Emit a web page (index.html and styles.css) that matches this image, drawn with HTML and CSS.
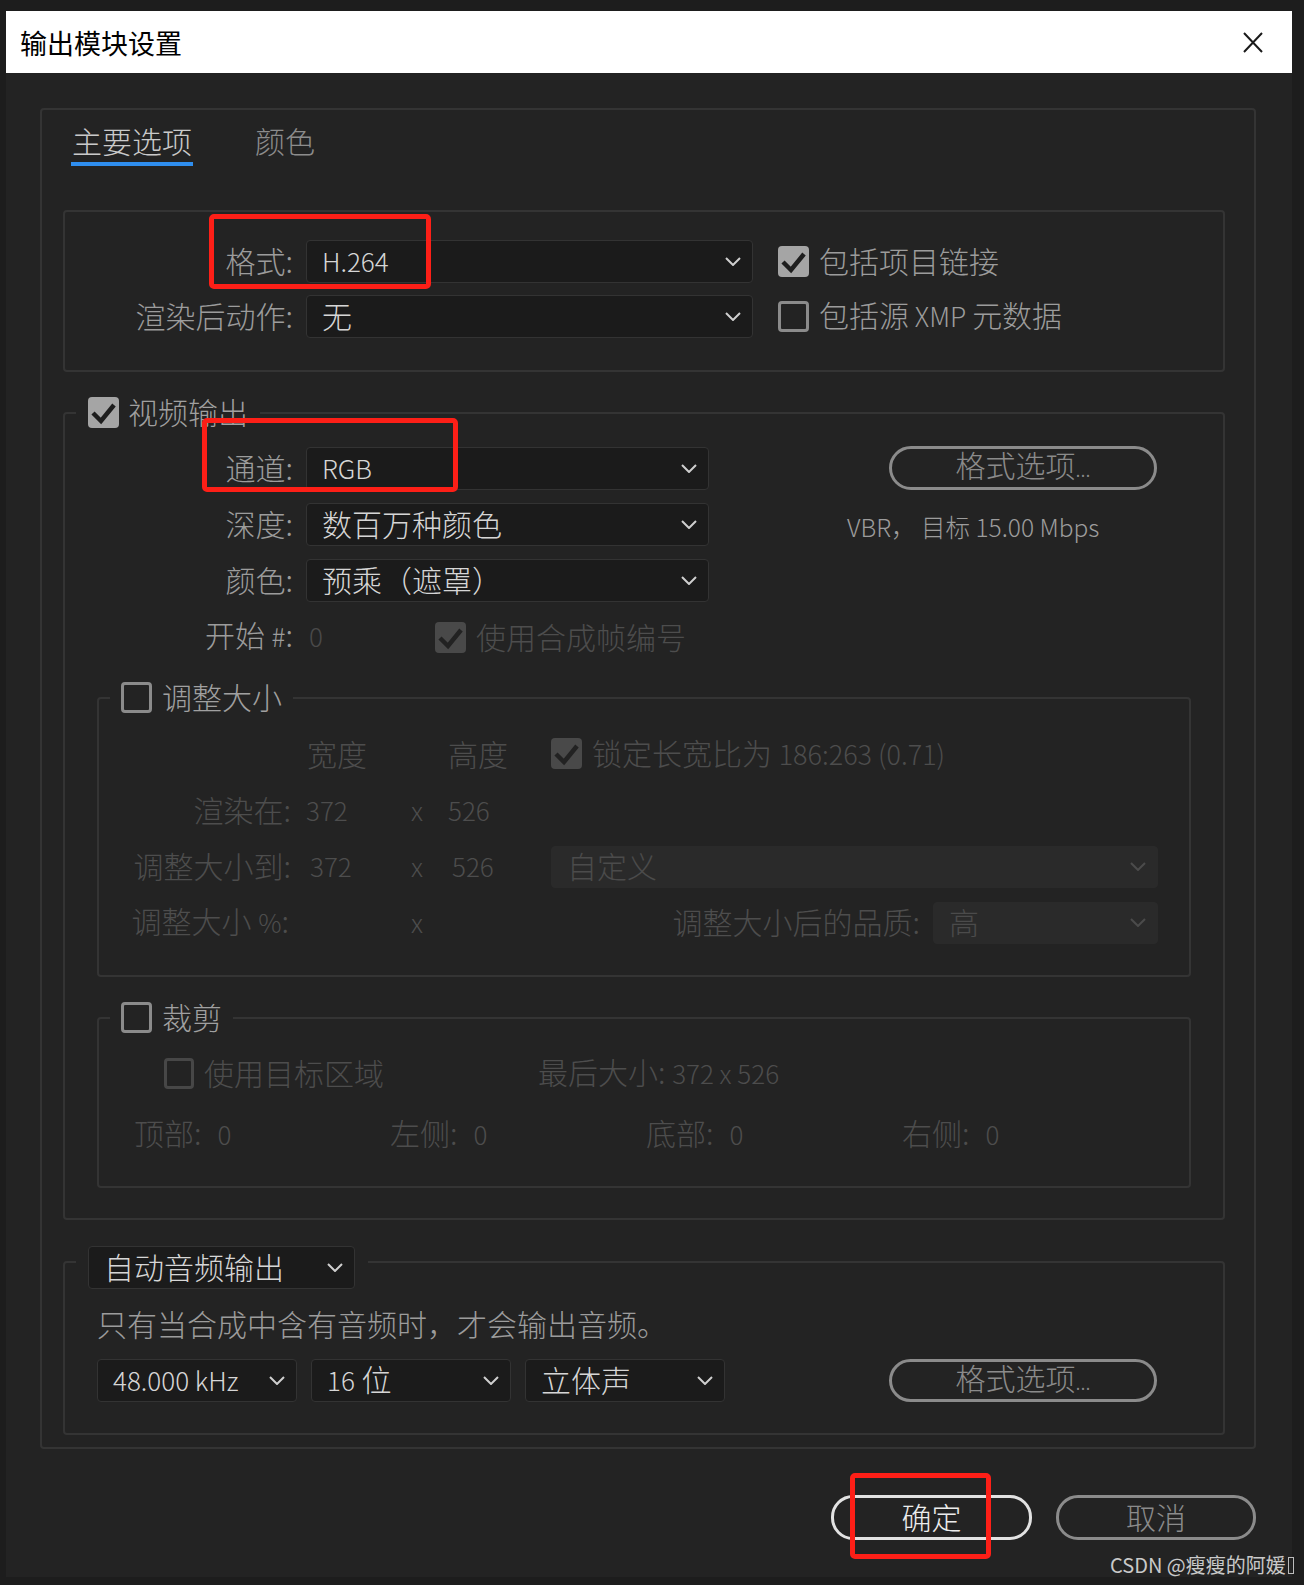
FILE: index.html
```html
<!DOCTYPE html>
<html lang="zh-CN">
<head>
<meta charset="utf-8">
<title>输出模块设置</title>
<link rel="stylesheet" href="styles.css">
</head>
<body>
<div class="dialog">
  <div class="titlebar">
    <span class="title">输出模块设置</span>
    <svg class="close" viewBox="0 0 20 21"><path d="M1 1L19 20M19 1L1 20"/></svg>
  </div>

  <div class="panel">
    <div class="tabs">
      <span class="tab active">主要选项</span>
      <span class="tab">颜色</span>
    </div>

    <div class="section1">
      <div class="row">
        <span class="lbl">格式:</span>
        <div class="select w447"><span class="val"><span class="l">H.264</span></span><svg class="chev" viewBox="0 0 16 9"><path d="M1 1L8 8L15 1"/></svg></div>
        <div class="opt"><span class="cb on"><svg viewBox="0 0 31 31"><path d="M5 16L13 24L26 8"/></svg></span><span class="txt">包括项目链接</span></div>
      </div>
      <div class="row">
        <span class="lbl">渲染后动作:</span>
        <div class="select w447"><span class="val">无</span><svg class="chev" viewBox="0 0 16 9"><path d="M1 1L8 8L15 1"/></svg></div>
        <div class="opt"><span class="cb off"></span><span class="txt">包括源<span class="xmp"> XMP </span>元数据</span></div>
      </div>
    </div>

    <fieldset class="group video">
      <legend class="lg"><span class="cb on"><svg viewBox="0 0 31 31"><path d="M5 16L13 24L26 8"/></svg></span><span class="txt">视频输出</span></legend>

      <div class="vtop">
        <div class="vrows">
          <div class="row">
            <span class="lbl">通道:</span>
            <div class="select w403"><span class="val"><span class="l">RGB</span></span><svg class="chev" viewBox="0 0 16 9"><path d="M1 1L8 8L15 1"/></svg></div>
          </div>
          <div class="row">
            <span class="lbl">深度:</span>
            <div class="select w403"><span class="val">数百万种颜色</span><svg class="chev" viewBox="0 0 16 9"><path d="M1 1L8 8L15 1"/></svg></div>
          </div>
          <div class="row">
            <span class="lbl">颜色:</span>
            <div class="select w403"><span class="val">预乘（遮罩）</span><svg class="chev" viewBox="0 0 16 9"><path d="M1 1L8 8L15 1"/></svg></div>
          </div>
        </div>
        <div class="vright">
          <div class="btn fmt"><span class="txt">格式选项<span class="dots">...</span></span></div>
          <div class="vbr">VBR， 目标 15.00 Mbps</div>
        </div>
      </div>

      <div class="startrow">
        <span class="lbl">开始 <span class="l">#</span>:</span>
        <span class="startval"><span class="l">0</span></span>
        <span class="cb dim on"><svg viewBox="0 0 31 31"><path d="M5 16L13 24L26 8"/></svg></span>
        <span class="dimtxt gap10 txt">使用合成帧编号</span>
      </div>

      <fieldset class="group sub resize">
        <legend class="lg sublg"><span class="cb off"></span><span class="txt">调整大小</span></legend>
        <div class="rgrid">
          <span></span>
          <span class="c2 p16">宽度</span>
          <span></span>
          <span class="c4">高度</span>
          <span class="c5 flexc"><span class="cb dim on"><svg viewBox="0 0 31 31"><path d="M5 16L13 24L26 8"/></svg></span><span class="gap10">锁定长宽比为 <span class="l ratio">186:263 (0.71)</span></span></span>

          <span class="rl">渲染在:</span>
          <span class="c2 p15"><span class="l">372</span></span>
          <span class="cx"><span class="l">x</span></span>
          <span class="c4"><span class="l">526</span></span>
          <span></span>

          <span class="rl">调整大小到:</span>
          <span class="c2 p19"><span class="l">372</span></span>
          <span class="cx"><span class="l">x</span></span>
          <span class="c4 p4"><span class="l">526</span></span>
          <div class="select dis"><span class="val">自定义</span><svg class="chev" viewBox="0 0 16 9"><path d="M1 1L8 8L15 1"/></svg></div>

          <span class="rl pr2">调整大小 <span class="l">%</span>:</span>
          <span></span>
          <span class="cx"><span class="l">x</span></span>
          <span></span>
          <div class="quality"><span class="txt">调整大小后的品质:</span><div class="select dis w225"><span class="val">高</span><svg class="chev" viewBox="0 0 16 9"><path d="M1 1L8 8L15 1"/></svg></div></div>
        </div>
      </fieldset>

      <fieldset class="group sub crop">
        <legend class="lg sublg"><span class="cb off"></span><span class="txt">裁剪</span></legend>
        <div class="croprow1">
          <span class="cb dim off small"></span>
          <span class="gap10 target">使用目标区域</span>
          <span>最后大小: <span class="l">372 x 526</span></span>
        </div>
        <div class="croprow2">
          <span>顶部:<span class="l zero">0</span></span>
          <span>左侧:<span class="l zero">0</span></span>
          <span>底部:<span class="l zero">0</span></span>
          <span>右侧:<span class="l zero">0</span></span>
        </div>
      </fieldset>
    </fieldset>

    <fieldset class="group audio">
      <legend class="audlg">
        <div class="select w267"><span class="val">自动音频输出</span><svg class="chev" viewBox="0 0 16 9"><path d="M1 1L8 8L15 1"/></svg></div>
      </legend>
      <div class="desc">只有当合成中含有音频时，才会输出音频。</div>
      <div class="arow">
        <div class="select w200"><span class="val"><span class="l">48.000 kHz</span></span><svg class="chev" viewBox="0 0 16 9"><path d="M1 1L8 8L15 1"/></svg></div>
        <div class="select w200"><span class="val"><span class="l">16</span> 位</span><svg class="chev" viewBox="0 0 16 9"><path d="M1 1L8 8L15 1"/></svg></div>
        <div class="select w200"><span class="val">立体声</span><svg class="chev" viewBox="0 0 16 9"><path d="M1 1L8 8L15 1"/></svg></div>
        <div class="btn fmt afmt"><span class="txt">格式选项<span class="dots">...</span></span></div>
      </div>
    </fieldset>
  </div>

  <div class="footer">
    <div class="btn ok"><span class="txt">确定</span></div>
    <div class="btn cancel"><span class="txt">取消</span></div>
  </div>

  <div class="mark m1"></div>
  <div class="mark m2"></div>
  <div class="mark m3"></div>
</div>
<div class="watermark">CSDN @瘦瘦的阿媛<span class="tofu"></span></div>
</body>
</html>
```

FILE: styles.css
```css
* { box-sizing: border-box; }
html, body { margin: 0; padding: 0; }
body {
  background: #1d1d1d;
  width: 1304px;
  height: 1585px;
  overflow: hidden;
  position: relative;
  font-family: "Noto Sans CJK SC", "Noto Sans", sans-serif;
  font-weight: 300;
  font-size: 30px;
  color: #9c9c9c;
}
.l { font-size: 26px; }

.dialog {
  position: relative;
  margin: 11px 0 0 6px;
  width: 1286px;
  height: 1566px;
  background: #232323;
}
.titlebar {
  height: 62px;
  background: #fff;
  display: flex;
  align-items: center;
  justify-content: space-between;
  padding: 0 29px 0 14px;
}
.title { font-size: 27px; line-height: 1; color: #000; font-weight: 400; }
.close { width: 20px; height: 21px; display: block; }
.close path { stroke: #1a1a1a; stroke-width: 2; fill: none; }

.panel {
  margin: 35px 36px 0 34px;
  border: 2px solid #343434;
  border-radius: 4px;
  padding: 12px 29px 12px 21px;
}
.tabs { display: flex; gap: 61px; margin-left: 8px; height: 44px; }
.tab {
  font-size: 30px;
  line-height: 36px;
  padding: 0 1px 4px;
  border-bottom: 4px solid transparent;
  color: #8c8c8c;
}
.tab.active { color: #cacaca; border-bottom-color: #2f8eef; }

.section1 {
  margin-top: 44px;
  height: 162px;
  border: 2px solid #343434;
  border-radius: 4px;
  padding: 28px 0 0;
  display: flex;
  flex-direction: column;
  gap: 12px;
}
.row { display: flex; align-items: center; height: 43px; }
.lbl {
  width: 228px;
  margin-right: 13px;
  text-align: right;
  line-height: 40px;
  padding-bottom: 4px;
  flex: none;
}
.txt { padding-bottom: 3px; }

.select {
  height: 43px;
  background: #1b1b1b;
  border: 1px solid #333;
  border-radius: 4px;
  display: flex;
  align-items: center;
  justify-content: space-between;
  padding: 0 11px 0 15px;
  color: #d6d6d6;
  line-height: 36px;
  flex: none;
}
.val { white-space: nowrap; padding-bottom: 3px; }
.chev { width: 16px; height: 9px; display: block; flex: none; }
.chev path { fill: none; stroke: #cfcfcf; stroke-width: 2; }
.w447 { width: 447px; }
.w403 { width: 403px; }
.w267 { width: 267px; }
.w225 { width: 225px; }
.w200 { width: 200px; }
.select.dis { background: #2a2a2a; border-color: #2a2a2a; color: #4b4b4b; }
.select.dis .chev path { stroke: #4b4b4b; }

.opt { margin-left: 25px; display: flex; align-items: center; gap: 10px; line-height: 36px; }
.xmp { font-size: 26.5px; }

.cb {
  width: 31px;
  height: 31px;
  border-radius: 4px;
  display: block;
  flex: none;
}
.cb svg { width: 31px; height: 31px; display: block; }
.cb path { fill: none; stroke: #1e1e1e; stroke-width: 4.5; }
.cb.on { background: #a5a5a5; }
.cb.off { border: 3px solid #8b8b8b; }
.cb.dim.on { background: #494949; }
.cb.dim.on path { stroke: #222; }
.cb.dim.off { border-color: #474747; }
.cb.small { width: 30px; }

fieldset.group {
  margin: 25px 0 0;
  border: 2px solid #343434;
  border-radius: 4px;
  padding: 0;
  min-width: 0;
}
.lg {
  margin-left: 11px;
  padding: 0 12px;
  display: flex;
  align-items: center;
  gap: 9px;
  height: 31px;
  line-height: 31px;
  color: #a0a0a0;
}
.video { padding-bottom: 30px !important; }

.vtop { display: flex; margin-top: 19px; }
.vrows { display: flex; flex-direction: column; gap: 13px; }
.vright { margin-left: 138px; display: flex; flex-direction: column; }

.btn {
  border: 3px solid #8b8b8b;
  border-radius: 22px;
  color: #8b8b8b;
  display: flex;
  align-items: center;
  justify-content: center;
  line-height: 34px;
}
.dots { font-size: 20px; }
.fmt { margin-left: 42px; width: 268px; height: 44px; margin-top: -1px; }
.vbr { margin-top: 22px; font-size: 24.5px; line-height: 30px; }

.startrow { display: flex; align-items: center; height: 40px; margin-top: 15px; }
.startval { width: 129px; padding: 0 0 4px 3px; color: #4a4a4a; line-height: 36px; }
.dimtxt { color: #4d4d4d; }
.gap10 { margin-left: 10px; }

.sub { margin: 25px 32px 0 !important; }
.sublg { margin-left: 11px; padding: 0 11px; gap: 10px; }

.rgrid {
  display: grid;
  grid-template-columns: 192px 120px 37px 103px 1fr;
  grid-auto-rows: 43px;
  row-gap: 13px;
  align-items: center;
  padding: 20px 31px 31px 0;
  color: #4d4d4d;
  line-height: 36px;
}
.rgrid > span { padding-bottom: 3px; }
.ratio { font-size: 27px; }
.rl { text-align: right; white-space: nowrap; }
.pr2 { padding-right: 2px; }
.p15 { padding-left: 15px; }
.p16 { padding-left: 16px; }
.p19 { padding-left: 19px; }
.p4 { padding-left: 4px; }
.flexc { display: flex; align-items: center; }
.quality { display: flex; align-items: center; justify-content: flex-end; gap: 13px; white-space: nowrap; }
.rgrid .select.dis { height: 42px; }

.croprow1 {
  display: flex;
  align-items: center;
  height: 43px;
  margin: 19px 0 0 65px;
  color: #4d4d4d;
  line-height: 36px;
}
.croprow1 > span { padding-bottom: 3px; }
.target { width: 334px; }
.croprow2 {
  display: grid;
  grid-template-columns: repeat(4, 256px);
  height: 43px;
  align-items: center;
  margin: 17px 0 31px 35px;
  color: #4d4d4d;
  line-height: 36px;
}
.croprow2 > span { padding-bottom: 2px; }
.zero { margin-left: 16px; }

.audio { margin-top: 14px !important; padding: 0 0 31px !important; }
.audlg { margin-left: 11px; padding: 12px 13px 0 12px; }
.desc { margin: 14px 0 0 32px; line-height: 40px; }
.arow { display: flex; align-items: center; gap: 14px; margin: 16px 0 0 32px; }
.afmt { margin: 0 0 0 150px; height: 43px; }

.footer {
  display: flex;
  justify-content: flex-end;
  gap: 24px;
  margin: 46px 36px 0 0;
}
.footer .btn { height: 45px; }
.ok { width: 201px; border-color: #e2e2e2; color: #ececec; }
.cancel { width: 200px; }

.mark {
  position: absolute;
  border: 5px solid #fd1f17;
  border-radius: 5px;
}
.m1 { left: 203px; top: 203px; width: 222px; height: 75px; }
.m2 { left: 196px; top: 407px; width: 256px; height: 74px; }
.m3 { left: 844px; top: 1462px; width: 141px; height: 86px; }

.watermark {
  position: absolute;
  left: 1110px;
  top: 1551px;
  font-size: 20px;
  font-weight: 400;
  line-height: 28px;
  color: #c9c9c9;
  white-space: nowrap;
  display: flex;
  align-items: center;
}
.tofu { display: inline-block; width: 6px; height: 17px; border: 1px solid #bbb; margin-left: 2px; }
```
